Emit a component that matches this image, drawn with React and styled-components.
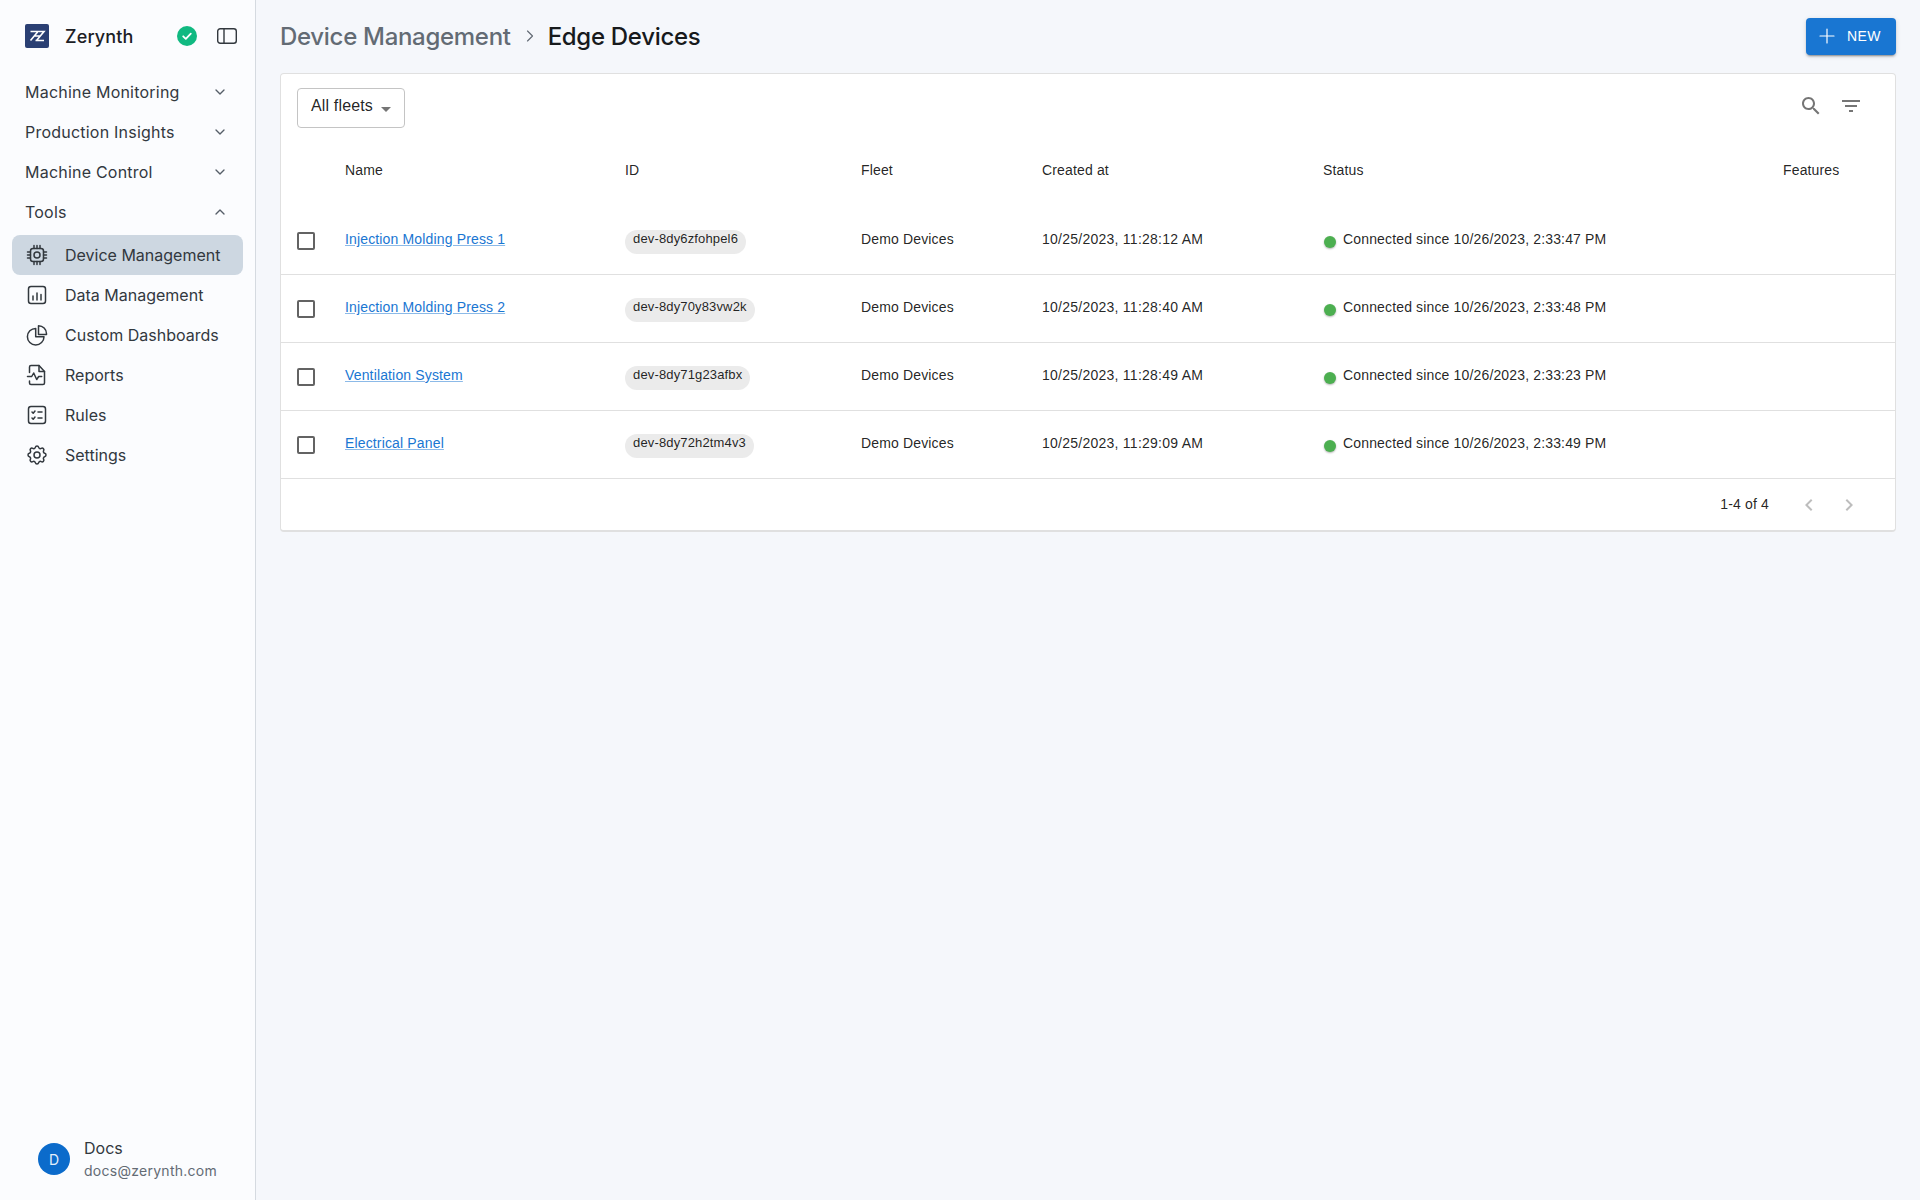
import { createGlobalStyle } from "styled-components";
import styled from "styled-components";
import { TbSettings } from "react-icons/tb";
import { ChevronDown, ChevronUp, ChevronRight, Plus } from "lucide-react";

const GlobalStyle = createGlobalStyle`
    html, body {
        margin: 0;
        padding: 0;
        height: 100%;
        background: #f5f7fb;
    }
    * {
        box-sizing: border-box;
    }
`;

const Page = styled.div`
    display: flex;
    width: 1920px;
    height: 1200px;
    overflow: hidden;
    background: #f5f7fb;
`;

const Sidebar = styled.aside`
    display: flex;
    flex-direction: column;
    width: 256px;
    height: 100%;
    flex-shrink: 0;
    padding: 0 12px;
    background: #fbfcfe;
    border-right: 1px solid #d5dae0;
    font-family: Inter, sans-serif;
`;

const Brand = styled.div`
    display: flex;
    align-items: center;
    height: 72px;
    padding: 0 6px 0 13px;
`;

const BrandName = styled.span`
    margin-left: 16px;
    font-size: 18px;
    font-weight: 450;
    letter-spacing: 0.15px;
    color: #1c2025;
    flex: 1;
`;

const BrandIcons = styled.div`
    display: flex;
    align-items: center;
    gap: 20px;
`;

const Nav = styled.nav`
    display: flex;
    flex-direction: column;
`;

const Section = styled.div`
    display: flex;
    align-items: center;
    justify-content: space-between;
    height: 40px;
    padding: 0 15px 0 13px;
    font-size: 16px;
    font-weight: 430;
    letter-spacing: 0.22px;
    color: #32383e;
`;

const NavItem = styled.div`
    display: flex;
    align-items: center;
    height: 40px;
    padding-left: 13px;
    margin-top: ${p => p.$first ? "3px" : "0"};
    border-radius: 8px;
    font-size: 16px;
    color: #32383e;
    background: ${p => p.$active ? "#cdd7e1" : "transparent"};
    svg {
        width: 24px;
        height: 24px;
        flex-shrink: 0;
    }
`;

const NavLabel = styled.span`
    margin-left: 16px;
`;

const Account = styled.div`
    display: flex;
    align-items: center;
    margin-top: auto;
    padding: 0 0 18px 26px;
`;

const Avatar = styled.div`
    display: flex;
    align-items: center;
    justify-content: center;
    width: 32px;
    height: 32px;
    border-radius: 50%;
    background: #0b6bcb;
    color: #e3effb;
    font-size: 14px;
`;

const AccountText = styled.div`
    display: flex;
    flex-direction: column;
    margin-left: 14px;
`;

const AccountName = styled.span`
    font-size: 16px;
    line-height: 24px;
    color: #32383e;
`;

const AccountMail = styled.span`
    font-size: 14px;
    line-height: 22px;
    letter-spacing: 0.27px;
    color: #636b74;
`;

const Main = styled.main`
    flex: 1;
    padding: 0 24px 0 24px;
    min-width: 0;
`;

const Header = styled.header`
    display: flex;
    align-items: center;
    justify-content: space-between;
    height: 73px;
    padding-bottom: 1px;
`;

const Crumbs = styled.div`
    display: flex;
    align-items: center;
    font-family: Inter, sans-serif;
    font-size: 24px;
    font-weight: 450;
    letter-spacing: -0.3px;
`;

const CrumbParent = styled.span`
    color: #636b74;
`;

const CrumbCurrent = styled.span`
    color: #171a1c;
`;

const CrumbArrow = styled.span`
    display: flex;
    margin: 0 8px 0 9px;
    color: #636b74;
`;

const NewButton = styled.button`
    display: flex;
    align-items: center;
    gap: 8px;
    width: 90px;
    height: 37px;
    padding: 0 0 0 9px;
    border: 0;
    border-radius: 4px;
    background: #1976d2;
    color: #fff;
    font-family: "Liberation Sans", Arial, sans-serif;
    font-size: 14px;
    letter-spacing: 0.4px;
    box-shadow: 0 3px 1px -2px rgba(0,0,0,.2), 0 2px 2px 0 rgba(0,0,0,.14), 0 1px 5px 0 rgba(0,0,0,.12);
`;

const Card = styled.section`
    height: 459px;
    background: #fff;
    border: 1px solid #e0e0e0;
    border-bottom-width: 2px;
    border-radius: 4px;
    font-family: "Liberation Sans", Arial, sans-serif;
    font-size: 14px;
    letter-spacing: 0.15px;
    color: rgba(0,0,0,.87);
`;

const Toolbar = styled.div`
    display: flex;
    align-items: flex-start;
    justify-content: space-between;
    height: 60px;
    padding: 14px 32px 0 16px;
`;

const FleetSelect = styled.div`
    display: flex;
    align-items: flex-start;
    width: 108px;
    height: 40px;
    padding: 8px 0 0 13px;
    border: 1px solid #c4c4c4;
    border-radius: 4px;
    font-size: 16px;
    line-height: 18px;
`;

const Caret = styled.span`
    width: 0;
    height: 0;
    margin: 10px 0 0 8px;
    border-left: 5px solid transparent;
    border-right: 5px solid transparent;
    border-top: 5px solid #757575;
`;

const ToolIcons = styled.div`
    display: flex;
    gap: 16px;
    color: #757575;
    padding-top: 6px;
`;

const Row = styled.div`
    display: grid;
    grid-template-columns: 64px 280px 236px 181px 281px 460px 1fr;
    align-items: center;
    height: ${p => p.$head ? "73px" : "68px"};
    border-bottom: ${p => p.$head ? "0" : "1px solid #e0e0e0"};
`;

const Cell = styled.div`
    white-space: nowrap;
    padding-bottom: 3px;
`;

const DateCell = styled(Cell)`
    letter-spacing: 0.25px;
`;

const HeadCell = styled.div`
    white-space: nowrap;
    padding-bottom: 1px;
`;

const CheckCell = styled.div`
    padding: 0 0 0 16px;
`;

const CheckBox = styled.span`
    display: block;
    width: 18px;
    height: 18px;
    border: 2px solid #636363;
    border-radius: 2px;
`;

const NameLink = styled.a`
    color: #1976d2;
    text-decoration: underline;
    text-decoration-color: rgba(25,118,210,.5);
`;

const Chip = styled.span`
    display: inline-block;
    height: 24px;
    margin-top: 2px;
    padding: 0 8px;
    border-radius: 12px;
    background: #ebebeb;
    font-size: 13px;
    line-height: 18px;
`;

const StatusCell = styled.div`
    display: flex;
    align-items: center;
    white-space: nowrap;
`;

const Dot = styled.span`
    width: 12px;
    height: 12px;
    margin: 2px 7px 0 1px;
    border-radius: 50%;
    background: #4caf50;
    box-shadow: 0 1px 2px rgba(0,0,0,.3);
`;

const StatusText = styled.span`
    padding-bottom: 3px;
`;

const Pager = styled.div`
    display: flex;
    align-items: center;
    justify-content: flex-end;
    height: 52px;
    padding-right: 34px;
`;

const PagerCount = styled.span`
    margin-right: 28px;
    padding-bottom: 2px;
`;

const PagerArrows = styled.div`
    display: flex;
    gap: 16px;
    color: #bdbdbd;
`;

const CheckBadge = () => (
    <svg width="20" height="20" viewBox="0 0 20 20">
        <circle cx="10" cy="10" r="10" fill="#10b981" />
        <path d="M6.2 10.3l2.6 2.5 5-5.2" fill="none" stroke="#fff" strokeWidth="1.8" strokeLinecap="round" strokeLinejoin="round" />
    </svg>
);

const PanelIcon = () => (
    <svg width="20" height="16" viewBox="0 0 20 16" fill="none" stroke="#32383e" strokeWidth="1.4">
        <rect x="0.7" y="0.7" width="18.6" height="14.6" rx="2.5" />
        <path d="M7 .7v14.6" />
    </svg>
);

const Logo = () => (
    <svg width="24" height="24" viewBox="0 0 24 24">
        <rect width="24" height="24" rx="2" fill="#2a3f73" />
        <path d="M5.5 7.5h7.5L5.5 16.5M10.5 16.5h8.5M9.5 12h6M14 7.5h5L11.5 16.5" fill="none" stroke="#fff" strokeWidth="1.6" />
    </svg>
);

const iconProps = { viewBox: "0 0 24 24", fill: "none", stroke: "#32383e", strokeWidth: 1.5, strokeLinecap: "round", strokeLinejoin: "round" };

const ChipIcon = () => (
    <svg {...iconProps}>
        <rect x="5.5" y="5.5" width="13" height="13" rx="2.5" />
        <circle cx="12" cy="12" r="3" />
        <path d="M9 2.5v3M12 2.5v3M15 2.5v3M9 18.5v3M12 18.5v3M15 18.5v3M2.5 9h3M2.5 12h3M2.5 15h3M18.5 9h3M18.5 12h3M18.5 15h3" />
    </svg>
);

const ColumnsIcon = () => (
    <svg {...iconProps}>
        <rect x="3.5" y="3.5" width="17" height="17" rx="2.5" />
        <path d="M8 17v-4M12 17v-7M16 17v-5.5" />
    </svg>
);

const PieIcon = () => (
    <svg {...iconProps}>
        <path d="M10.7 5.4a8.3 8.3 0 1 0 8.3 8.3h-8.3z" />
        <path d="M13.5 2.7a8 8 0 0 1 8 8v.8h-8z" />
    </svg>
);

const ReportIcon = () => (
    <svg {...iconProps}>
        <path d="M4.5 9.5V4a1.5 1.5 0 0 1 1.5-1.5h8l5.5 6V20a1.5 1.5 0 0 1-1.5 1.5H6A1.5 1.5 0 0 1 4.5 20v-2" />
        <path d="M14 2.5v6h5.5" />
        <path d="M2.5 13.5h4.2l2-3.5 3 6.5 2-3h3" />
    </svg>
);

const RulesIcon = () => (
    <svg {...iconProps}>
        <rect x="3.5" y="3.5" width="17" height="17" rx="2.5" />
        <path d="M7 9l1.2 1.2L10 8M7 15l1.2 1.2L10 14M13 9h4M13 15h4" />
    </svg>
);

const Search = () => (
    <svg width="24" height="24" viewBox="0 0 24 24" fill="currentColor">
        <path d="M15.5 14h-.79l-.28-.27C15.41 12.59 16 11.11 16 9.5 16 5.91 13.09 3 9.5 3S3 5.91 3 9.5 5.91 16 9.5 16c1.61 0 3.09-.59 4.23-1.57l.27.28v.79l5 4.99L20.49 19l-4.99-5zm-6 0C7.01 14 5 11.99 5 9.5S7.01 5 9.5 5 14 7.01 14 9.5 11.99 14 9.5 14z" />
    </svg>
);

const FilterLines = () => (
    <svg width="24" height="24" viewBox="0 0 24 24" fill="currentColor">
        <path d="M10 18h4v-2h-4v2zM3 6v2h18V6H3zm3 7h12v-2H6v2z" />
    </svg>
);

const PrevArrow = () => (
    <svg width="24" height="24" viewBox="0 0 24 24" fill="currentColor">
        <path d="M15.41 7.41 14 6l-6 6 6 6 1.41-1.41L10.83 12z" />
    </svg>
);

const NextArrow = () => (
    <svg width="24" height="24" viewBox="0 0 24 24" fill="currentColor">
        <path d="M10 6 8.59 7.41 13.17 12l-4.58 4.59L10 18l6-6z" />
    </svg>
);

const sections = ["Machine Monitoring", "Production Insights", "Machine Control"];

const tools = [
    { label: "Device Management", icon: <ChipIcon />, active: true },
    { label: "Data Management", icon: <ColumnsIcon /> },
    { label: "Custom Dashboards", icon: <PieIcon /> },
    { label: "Reports", icon: <ReportIcon /> },
    { label: "Rules", icon: <RulesIcon /> },
    { label: "Settings", icon: <TbSettings strokeWidth={1.5} /> },
];

const devices = [
    { name: "Injection Molding Press 1", id: "dev-8dy6zfohpel6", created: "10/25/2023, 11:28:12 AM", since: "10/26/2023, 2:33:47 PM" },
    { name: "Injection Molding Press 2", id: "dev-8dy70y83vw2k", created: "10/25/2023, 11:28:40 AM", since: "10/26/2023, 2:33:48 PM" },
    { name: "Ventilation System", id: "dev-8dy71g23afbx", created: "10/25/2023, 11:28:49 AM", since: "10/26/2023, 2:33:23 PM" },
    { name: "Electrical Panel", id: "dev-8dy72h2tm4v3", created: "10/25/2023, 11:29:09 AM", since: "10/26/2023, 2:33:49 PM" },
];

export default function App() {
    return (
        <Page>
            <GlobalStyle />
            <Sidebar>
                <Brand>
                    <Logo />
                    <BrandName>Zerynth</BrandName>
                    <BrandIcons>
                        <CheckBadge />
                        <PanelIcon />
                    </BrandIcons>
                </Brand>
                <Nav>
                    {sections.map(s => (
                        <Section key={s}>
                            {s}
                            <ChevronDown size={16} color="#555e68" />
                        </Section>
                    ))}
                    <Section>
                        Tools
                        <ChevronUp size={16} color="#555e68" />
                    </Section>
                    {tools.map((t, i) => (
                        <NavItem key={t.label} $active={t.active} $first={i === 0}>
                            {t.icon}
                            <NavLabel>{t.label}</NavLabel>
                        </NavItem>
                    ))}
                </Nav>
                <Account>
                    <Avatar>D</Avatar>
                    <AccountText>
                        <AccountName>Docs</AccountName>
                        <AccountMail>docs@zerynth.com</AccountMail>
                    </AccountText>
                </Account>
            </Sidebar>
            <Main>
                <Header>
                    <Crumbs>
                        <CrumbParent>Device Management</CrumbParent>
                        <CrumbArrow><ChevronRight size={20} strokeWidth={1.4} /></CrumbArrow>
                        <CrumbCurrent>Edge Devices</CrumbCurrent>
                    </Crumbs>
                    <NewButton><Plus size={24} strokeWidth={1.2} />NEW</NewButton>
                </Header>
                <Card>
                    <Toolbar>
                        <FleetSelect>All fleets<Caret /></FleetSelect>
                        <ToolIcons>
                            <Search />
                            <FilterLines />
                        </ToolIcons>
                    </Toolbar>
                    <Row $head>
                        <span />
                        <HeadCell>Name</HeadCell>
                        <HeadCell>ID</HeadCell>
                        <HeadCell>Fleet</HeadCell>
                        <HeadCell>Created at</HeadCell>
                        <HeadCell>Status</HeadCell>
                        <HeadCell>Features</HeadCell>
                    </Row>
                    {devices.map(d => (
                        <Row key={d.id}>
                            <CheckCell><CheckBox /></CheckCell>
                            <Cell><NameLink>{d.name}</NameLink></Cell>
                            <div><Chip>{d.id}</Chip></div>
                            <Cell>Demo Devices</Cell>
                            <DateCell>{d.created}</DateCell>
                            <StatusCell>
                                <Dot />
                                <StatusText>Connected since {d.since}</StatusText>
                            </StatusCell>
                            <span />
                        </Row>
                    ))}
                    <Pager>
                        <PagerCount>1-4 of 4</PagerCount>
                        <PagerArrows>
                            <PrevArrow />
                            <NextArrow />
                        </PagerArrows>
                    </Pager>
                </Card>
            </Main>
        </Page>
    );
}
